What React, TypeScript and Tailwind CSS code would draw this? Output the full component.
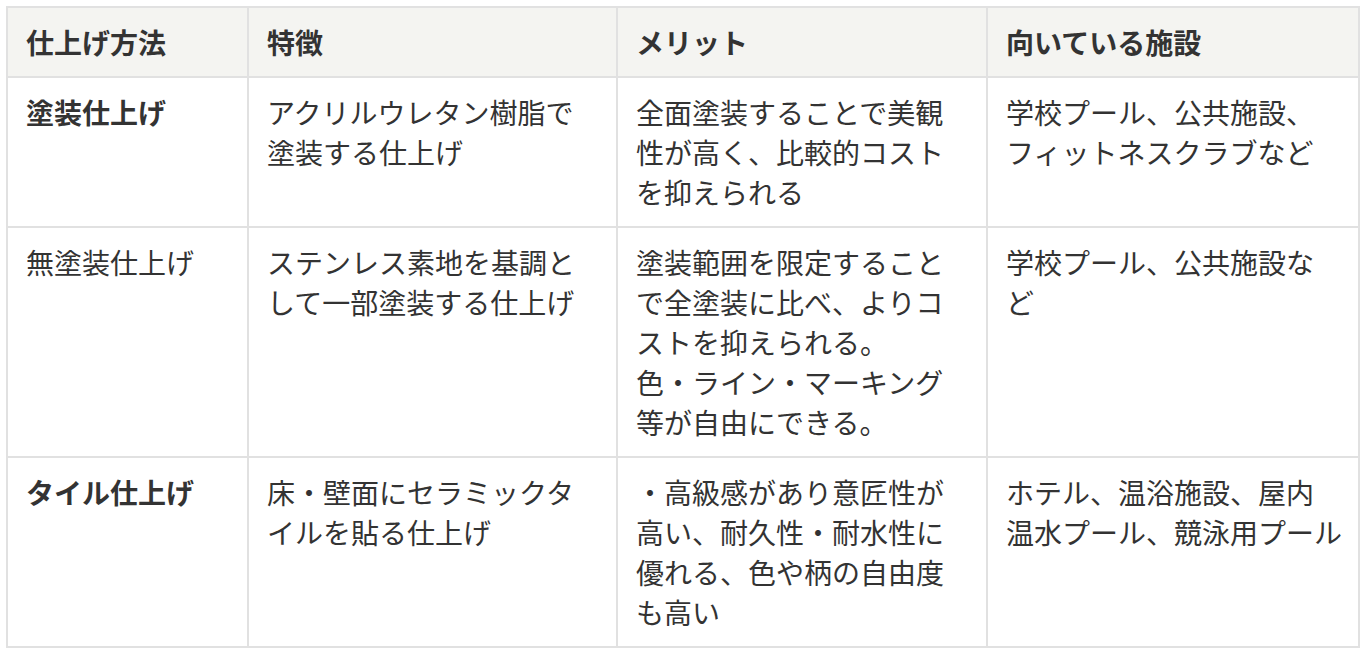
import React from "react";

type Cell = { lines: string[]; bold?: boolean };

const header = ["仕上げ方法", "特徴", "メリット", "向いている施設"];

const rows: Cell[][] = [
  [
    { lines: ["塗装仕上げ"], bold: true },
    { lines: ["アクリルウレタン樹脂で", "塗装する仕上げ"] },
    { lines: ["全面塗装することで美観", "性が高く、比較的コスト", "を抑えられる"] },
    { lines: ["学校プール、公共施設、", "フィットネスクラブなど"] },
  ],
  [
    { lines: ["無塗装仕上げ"] },
    { lines: ["ステンレス素地を基調と", "して一部塗装する仕上げ"] },
    {
      lines: [
        "塗装範囲を限定すること",
        "で全塗装に比べ、よりコ",
        "ストを抑えられる。",
        "色・ライン・マーキング",
        "等が自由にできる。",
      ],
    },
    { lines: ["学校プール、公共施設な", "ど"] },
  ],
  [
    { lines: ["タイル仕上げ"], bold: true },
    { lines: ["床・壁面にセラミックタ", "イルを貼る仕上げ"] },
    { lines: ["・高級感があり意匠性が", "高い、耐久性・耐水性に", "優れる、色や柄の自由度", "も高い"] },
    { lines: ["ホテル、温浴施設、屋内", "温水プール、競泳用プール"] },
  ],
];

function Lines({ lines }: { lines: string[] }) {
  return (
    <>
      {lines.map((l, i) => (
        <React.Fragment key={i}>
          {i > 0 && <br />}
          {l}
        </React.Fragment>
      ))}
    </>
  );
}

export default function App() {
  return (
    <div className="bg-white w-[1364px] h-[652px] p-[6px] font-['Noto_Sans_CJK_JP','Noto_Sans',sans-serif] text-[#333333]">
      <table className="table-fixed border-collapse w-[1352px] text-[28px] leading-[40px]">
        <colgroup>
          <col className="w-[241px]" />
          <col className="w-[369px]" />
          <col className="w-[370px]" />
          <col className="w-[372px]" />
        </colgroup>
        <thead>
          <tr className="bg-[#f4f4f1]">
            {header.map((h) => (
              <th
                key={h}
                className="border-2 border-[#e1e1e1] px-[18px] py-[14px] text-left font-bold align-top whitespace-nowrap"
              >
                {h}
              </th>
            ))}
          </tr>
        </thead>
        <tbody>
          {rows.map((r, ri) => (
            <tr key={ri}>
              {r.map((c, ci) => (
                <td
                  key={ci}
                  className={
                    "border-2 border-[#e1e1e1] px-[18px] py-[14px] align-top whitespace-nowrap " +
                    (c.bold ? "font-bold" : "font-normal")
                  }
                >
                  <Lines lines={c.lines} />
                </td>
              ))}
            </tr>
          ))}
        </tbody>
      </table>
    </div>
  );
}
